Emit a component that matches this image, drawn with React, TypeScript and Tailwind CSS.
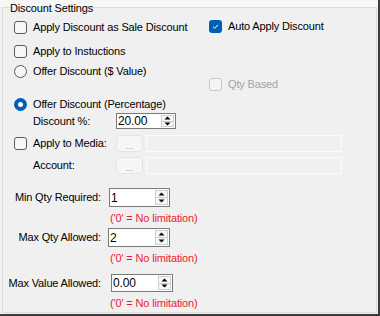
import React from "react";

function CheckBox({ checked = false, disabled = false }: { checked?: boolean; disabled?: boolean }) {
  if (checked)
    return (
      <div className="w-[13px] h-[13px] rounded-[3px] bg-[#005fb8] flex items-center justify-center shrink-0">
        <svg width="9" height="9" viewBox="0 0 9 9">
          <path d="M2 4.6 L3.8 6.3 L7.1 2.8" fill="none" stroke="white" strokeWidth="1" />
        </svg>
      </div>
    );
  return (
    <div
      className={
        disabled
          ? "w-[13px] h-[13px] rounded-[3px] border border-[#c9c9c9] bg-[#f5f5f5] shrink-0"
          : "w-[13px] h-[13px] rounded-[3px] border border-[#5a5a5a] bg-[#f7f7f7] shrink-0"
      }
    />
  );
}

function Radio({ checked = false }: { checked?: boolean }) {
  if (checked)
    return (
      <div className="w-[13px] h-[13px] rounded-full bg-[#005fb8] flex items-center justify-center shrink-0">
        <div className="w-[5px] h-[5px] rounded-full bg-white" />
      </div>
    );
  return <div className="w-[13px] h-[13px] rounded-full border border-[#5a5a5a] bg-[#f7f7f7] shrink-0" />;
}

function Arrow({ up }: { up?: boolean }) {
  return (
    <svg width="7" height="4" viewBox="0 0 7 4">
      {up ? <path d="M0.5 3.5 L3.5 0.5 L6.5 3.5 Z" fill="#000" /> : <path d="M0.5 0.5 L3.5 3.5 L6.5 0.5 Z" fill="#000" />}
    </svg>
  );
}

function SpinInput({ value, className }: { value: string; className: string }) {
  return (
    <div className={"flex items-stretch border border-[#7a7a7a] bg-white shrink-0 " + className}>
      <span className="flex-1 pl-[1px] flex items-center leading-none text-[12px]">{value}</span>
      <div className="flex flex-col w-[13px] my-[1px] mr-[1px] border border-[#cfcfcf] bg-[#f7f7f7]">
        <div className="flex-1 flex items-center justify-center border-b border-[#cfcfcf]">
          <Arrow up />
        </div>
        <div className="flex-1 flex items-center justify-center">
          <Arrow />
        </div>
      </div>
    </div>
  );
}

function DotButton() {
  return (
    <div className="w-[27px] h-[17px] rounded-[4px] border border-[#e4e4e4] bg-[#f6f6f6] flex items-end justify-center text-[9px] leading-[10px] text-[#a0a0a0] shrink-0">
      ...
    </div>
  );
}

function DisabledBox() {
  return <div className="ml-[3px] w-[196px] h-[17px] border border-[#fbfbfb] bg-[#f0f0f0] shrink-0" />;
}

const red = "h-[14px] flex items-center pl-[107px] text-[#f3172f] leading-none";

export default function App() {
  return (
    <div className="w-[380px] h-[316px] bg-[#f0f0f0] border-r-2 border-b-2 border-[#3c3c3c] font-['Liberation_Sans',Arial,sans-serif] text-[11px] tracking-[-0.15px] text-black overflow-hidden">
      <div className="h-[7px] bg-[#f7f7f7]" />
      <div className="relative ml-[2px] w-[375px] h-[306px] border border-[#dcdcdc]">
        <span className="absolute left-[7px] -top-[6px] leading-[13px] bg-[linear-gradient(to_bottom,#f7f7f7_5px,#f0f0f0_5px)]">
          Discount Settings
        </span>

        <div className="flex items-start">
          <div className="ml-[11px] w-[195px] pt-[13px] flex flex-col">
            <div className="h-[13px] flex items-center gap-[6px] leading-[13px]">
              <CheckBox />
              <span>Apply Discount as Sale Discount</span>
            </div>
            <div className="mt-[11px] h-[13px] flex items-center gap-[6px] leading-[13px]">
              <CheckBox />
              <span>Apply to Instuctions</span>
            </div>
            <div className="mt-[7px] h-[13px] flex items-center gap-[6px] leading-[13px]">
              <Radio />
              <span>Offer Discount ($ Value)</span>
            </div>
            <div className="mt-[20px] h-[13px] flex items-center gap-[6px] leading-[13px]">
              <Radio checked />
              <span>Offer Discount (Percentage)</span>
            </div>
          </div>
          <div className="pt-[12px] flex flex-col">
            <div className="h-[13px] flex items-center gap-[6px] leading-[13px]">
              <CheckBox checked />
              <span>Auto Apply Discount</span>
            </div>
            <div className="mt-[45px] h-[13px] flex items-center gap-[6px] leading-[13px] text-[#a3a3a3]">
              <CheckBox disabled />
              <span>Qty Based</span>
            </div>
          </div>
        </div>

        <div className="mt-[2px] ml-[30px] h-[16px] flex items-center">
          <span className="w-[83px]">Discount %:</span>
          <SpinInput value="20.00" className="w-[60px] h-[16px]" />
        </div>

        <div className="mt-[6px] ml-[11px] h-[17px] flex items-center">
          <CheckBox />
          <span className="ml-[6px] w-[83px]">Apply to Media:</span>
          <DotButton />
          <DisabledBox />
        </div>

        <div className="mt-[5px] ml-[30px] h-[17px] flex items-center">
          <span className="w-[83px]">Account:</span>
          <DotButton />
          <DisabledBox />
        </div>

        <div className="mt-[14px] h-[19px] flex items-center">
          <span className="w-[98px] text-right">Min Qty Required:</span>
          <SpinInput value="1" className="ml-[8px] w-[61px] h-[19px]" />
        </div>
        <div className={"mt-[4px] " + red}>('0' = No limitation)</div>

        <div className="mt-[3px] h-[19px] flex items-center">
          <span className="w-[98px] text-right">Max Qty Allowed:</span>
          <SpinInput value="2" className="ml-[7px] w-[62px] h-[19px]" />
        </div>
        <div className={"mt-[4px] " + red}>('0' = No limitation)</div>

        <div className="mt-[9px] h-[18px] flex items-center">
          <span className="w-[98px] text-right">Max Value Allowed:</span>
          <SpinInput value="0.00" className="ml-[10px] w-[62px] h-[18px]" />
        </div>
        <div className={"mt-[4px] " + red}>('0' = No limitation)</div>
      </div>
    </div>
  );
}
